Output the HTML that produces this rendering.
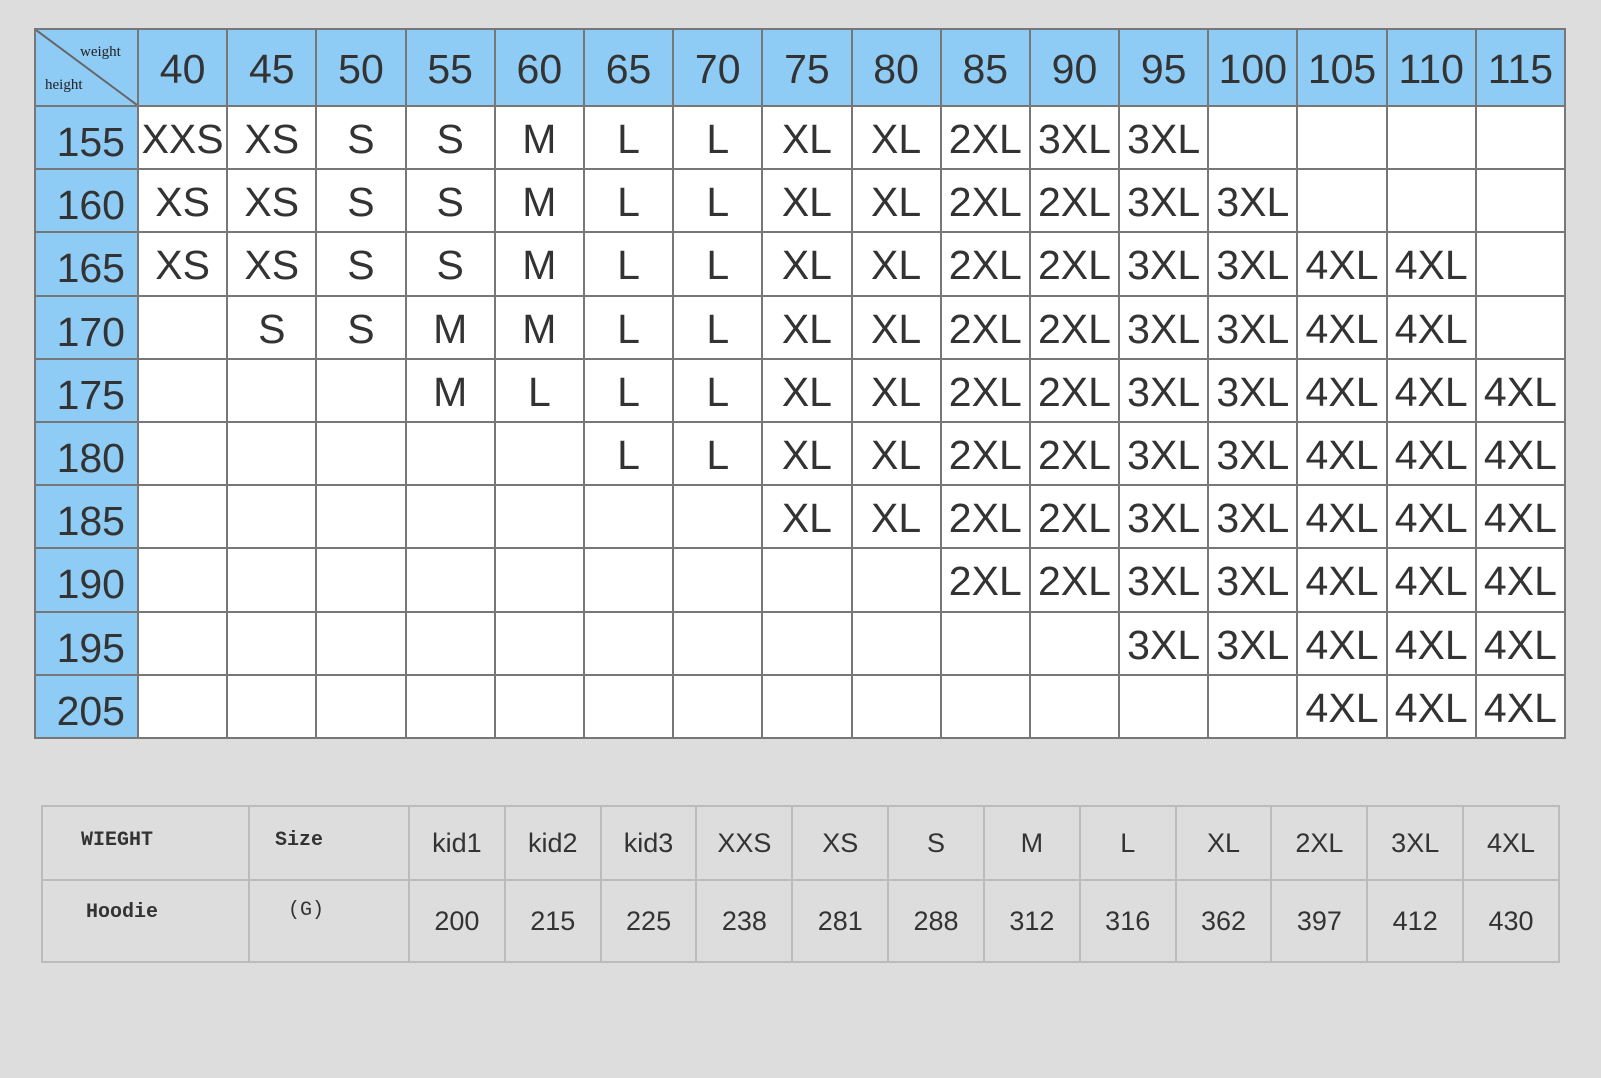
<!DOCTYPE html>
<html><head><meta charset="utf-8"><style>
body{margin:0;width:1601px;height:1078px;background:#dddddd;position:relative;overflow:hidden;font-family:"Liberation Sans",sans-serif;}
.g{position:absolute;left:34px;top:28px;width:1528px;height:707px;padding:2px;background:#777;display:grid;grid-template-columns:101px repeat(16,1fr);grid-template-rows:75px repeat(10,1fr);gap:2px;}
.g div{background:#fff;display:flex;align-items:center;justify-content:center;font-size:41px;color:#333;white-space:nowrap;overflow:hidden;padding-top:4px;box-sizing:border-box;}
.g div.h{background:#8ecbf5;}
.g div.b{background:#8ecbf5;justify-content:flex-end;padding-right:12px;padding-top:10px;}
.g div.c{background:#8ecbf5;position:relative;padding:0;}
.t2{position:absolute;left:41px;top:805px;border-collapse:collapse;table-layout:fixed;width:1519px;}
.t2 td{border:2px solid #bbb;text-align:center;font-size:27px;color:#333;height:72px;padding:0;}
.mono{font-family:"Liberation Mono",monospace;font-weight:bold;font-size:20px!important;}
</style></head><body>
<div class="g">
<div class="c"><svg width="101" height="75" style="position:absolute;left:0;top:0"><line x1="0" y1="0" x2="101" y2="75" stroke="#666" stroke-width="2"/><text x="44" y="26" font-family="Liberation Serif,serif" font-size="15" fill="#222">weight</text><text x="9" y="59" font-family="Liberation Serif,serif" font-size="15" fill="#222">height</text></svg></div>
<div class="h">40</div><div class="h">45</div><div class="h">50</div><div class="h">55</div><div class="h">60</div><div class="h">65</div><div class="h">70</div><div class="h">75</div><div class="h">80</div><div class="h">85</div><div class="h">90</div><div class="h">95</div><div class="h">100</div><div class="h">105</div><div class="h">110</div><div class="h">115</div>
<div class="b">155</div><div>XXS</div><div>XS</div><div>S</div><div>S</div><div>M</div><div>L</div><div>L</div><div>XL</div><div>XL</div><div>2XL</div><div>3XL</div><div>3XL</div><div></div><div></div><div></div><div></div>
<div class="b">160</div><div>XS</div><div>XS</div><div>S</div><div>S</div><div>M</div><div>L</div><div>L</div><div>XL</div><div>XL</div><div>2XL</div><div>2XL</div><div>3XL</div><div>3XL</div><div></div><div></div><div></div>
<div class="b">165</div><div>XS</div><div>XS</div><div>S</div><div>S</div><div>M</div><div>L</div><div>L</div><div>XL</div><div>XL</div><div>2XL</div><div>2XL</div><div>3XL</div><div>3XL</div><div>4XL</div><div>4XL</div><div></div>
<div class="b">170</div><div></div><div>S</div><div>S</div><div>M</div><div>M</div><div>L</div><div>L</div><div>XL</div><div>XL</div><div>2XL</div><div>2XL</div><div>3XL</div><div>3XL</div><div>4XL</div><div>4XL</div><div></div>
<div class="b">175</div><div></div><div></div><div></div><div>M</div><div>L</div><div>L</div><div>L</div><div>XL</div><div>XL</div><div>2XL</div><div>2XL</div><div>3XL</div><div>3XL</div><div>4XL</div><div>4XL</div><div>4XL</div>
<div class="b">180</div><div></div><div></div><div></div><div></div><div></div><div>L</div><div>L</div><div>XL</div><div>XL</div><div>2XL</div><div>2XL</div><div>3XL</div><div>3XL</div><div>4XL</div><div>4XL</div><div>4XL</div>
<div class="b">185</div><div></div><div></div><div></div><div></div><div></div><div></div><div></div><div>XL</div><div>XL</div><div>2XL</div><div>2XL</div><div>3XL</div><div>3XL</div><div>4XL</div><div>4XL</div><div>4XL</div>
<div class="b">190</div><div></div><div></div><div></div><div></div><div></div><div></div><div></div><div></div><div></div><div>2XL</div><div>2XL</div><div>3XL</div><div>3XL</div><div>4XL</div><div>4XL</div><div>4XL</div>
<div class="b">195</div><div></div><div></div><div></div><div></div><div></div><div></div><div></div><div></div><div></div><div></div><div></div><div>3XL</div><div>3XL</div><div>4XL</div><div>4XL</div><div>4XL</div>
<div class="b">205</div><div></div><div></div><div></div><div></div><div></div><div></div><div></div><div></div><div></div><div></div><div></div><div></div><div></div><div>4XL</div><div>4XL</div><div>4XL</div>
</div>
<table class="t2">
<colgroup><col style="width:207px"><col style="width:160px"><col span="12"></colgroup>
<tr><td class="mono" style="text-align:left;padding-left:38px;vertical-align:top;padding-top:22px;height:50px">WIEGHT</td><td class="mono" style="text-align:left;padding-left:25px;vertical-align:top;padding-top:22px;height:50px">Size</td><td>kid1</td><td>kid2</td><td>kid3</td><td>XXS</td><td>XS</td><td>S</td><td>M</td><td>L</td><td>XL</td><td>2XL</td><td>3XL</td><td>4XL</td></tr>
<tr><td class="mono" style="text-align:left;padding-left:43px;vertical-align:top;padding-top:20px;height:60px">Hoodie</td><td class="mono" style="text-align:left;padding-left:38px;vertical-align:top;padding-top:18px;height:60px;font-weight:normal">(G)</td><td>200</td><td>215</td><td>225</td><td>238</td><td>281</td><td>288</td><td>312</td><td>316</td><td>362</td><td>397</td><td>412</td><td>430</td></tr>
</table>
</body></html>
